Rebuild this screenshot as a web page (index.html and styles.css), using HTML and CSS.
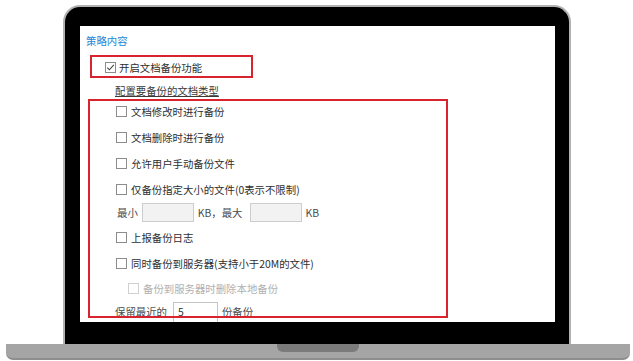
FILE: index.html
```html
<!DOCTYPE html>
<html lang="zh-CN">
<head>
  <meta charset="UTF-8">
  <meta name="viewport" content="width=device-width, initial-scale=1.0">
  <title>文档备份策略</title>
  <link rel="stylesheet" href="styles.css">
</head>
<body>
  <div class="laptop">
    <div class="lid">
      <div class="screen">
        <div class="panel-title">策略内容</div>

        <!-- master switch -->
        <div class="row master">
          <span class="box checked">
            <svg width="9" height="9" viewBox="0 0 9 9"><polyline points="1.3,4.6 3.4,6.8 7.8,1.8" fill="none" stroke="#444" stroke-width="1.1"/></svg>
          </span>
          <span>开启文档备份功能</span>
        </div>

        <div class="row link tight">配置要备份的文档类型</div>

        <!-- backup options -->
        <div class="row opt tighter"><span class="box"></span><span>文档修改时进行备份</span></div>
        <div class="row opt"><span class="box"></span><span>文档删除时进行备份</span></div>
        <div class="row opt"><span class="box"></span><span>允许用户手动备份文件</span></div>
        <div class="row opt"><span class="box"></span><span>仅备份指定大小的文件(0表示不限制)</span></div>
        <div class="row size tight">
          <span class="muted">最小</span>
          <span class="field field-size"></span>
          <span class="muted">KB，最大</span>
          <span class="field field-size"></span>
          <span class="muted">KB</span>
        </div>
        <div class="row opt snug"><span class="box"></span><span>上报备份日志</span></div>
        <div class="row opt"><span class="box"></span><span>同时备份到服务器(支持小于20M的文件)</span></div>
        <div class="row opt sub snug"><span class="box"></span><span>备份到服务器时删除本地备份</span></div>
        <div class="row keep tight">
          <span class="muted">保留最近的</span>
          <span class="field field-keep">5</span>
          <span class="muted">份备份</span>
        </div>

        <!-- red annotation frames -->
        <div class="mark mark-main"></div>
        <div class="mark mark-types"></div>
      </div>
    </div>
    <div class="base"><div class="notch"></div></div>
  </div>
</body>
</html>
```

FILE: styles.css
```css
body {
  margin: 0;
  width: 633px;
  height: 361px;
  overflow: hidden;
  background: #fff;
  font-family: "Noto Sans CJK SC", "Noto Sans", sans-serif;
  font-size: 10.4px;
  color: #2e2e2e;
}
.laptop {
  padding-top: 5px;
}
.lid {
  box-sizing: border-box;
  width: 508px;
  height: 339px;
  margin-left: 63px;
  padding: 19px 14px 22px 15px;
  background: #000;
  border: 2px solid #b2b2b2;
  border-bottom: none;
  border-radius: 17px 17px 0 0;
}
.screen {
  position: relative;
  height: 296px;
  padding: 5px 0 0 6px;
  box-sizing: border-box;
  background: #fff;
  overflow: hidden;
}
.panel-title {
  height: 20px;
  line-height: 20px;
  color: #2388d6;
}
.row {
  display: flex;
  align-items: center;
  height: 20px;
  margin-top: 6px;
  white-space: nowrap;
}
.tight {
  margin-top: 3px;
}
.tighter {
  margin-top: 1px;
}
.snug {
  margin-top: 5px;
}
.master {
  padding-left: 19px;
}
.link {
  padding-left: 29px;
  text-decoration: underline;
  color: #3a3a3a;
}
.opt {
  padding-left: 30px;
}
.opt.sub {
  padding-left: 42px;
  color: #b0b0b0;
}
.box {
  box-sizing: border-box;
  width: 11px;
  height: 11px;
  margin-right: 4px;
  border: 1px solid #8c8c8c;
  background: #fff;
  display: flex;
  align-items: center;
  justify-content: center;
}
.master .box {
  margin-right: 3px;
}
.sub .box {
  border-color: #d0d0d0;
}
.size {
  padding-left: 31px;
}
.keep {
  padding-left: 29px;
}
.muted {
  color: #4a4a4a;
}
.field {
  box-sizing: border-box;
  height: 19px;
  border: 1px solid #cdcdcd;
  line-height: 17px;
  padding-left: 4px;
}
.field-size {
  width: 52px;
  margin: 0 4px 0 7px;
  background: #f2f2f2;
}
.size .field-size:nth-of-type(2) {
  margin-left: 4px;
}
.field-keep {
  width: 45px;
  height: 24px;
  margin: 0 4px 0 6px;
  align-self: flex-start;
  margin-top: 1px;
  border-color: #c4c4c4;
  color: #333;
}
.mark {
  position: absolute;
  box-sizing: border-box;
  border: 2px solid #d8242e;
}
.mark-main {
  left: 10px;
  top: 29px;
  width: 163px;
  height: 23px;
}
.mark-types {
  left: 8px;
  top: 73px;
  width: 360px;
  height: 219px;
}
.base {
  width: 624px;
  height: 14px;
  margin-left: 6px;
  background: #a5a5a5;
  border-bottom: 2px solid #8e8e8e;
  border-radius: 0 0 7px 7px;
}
.notch {
  width: 82px;
  height: 8px;
  margin: 0 auto;
  background: #7b7b7b;
  border-radius: 0 0 6px 6px;
}
```
